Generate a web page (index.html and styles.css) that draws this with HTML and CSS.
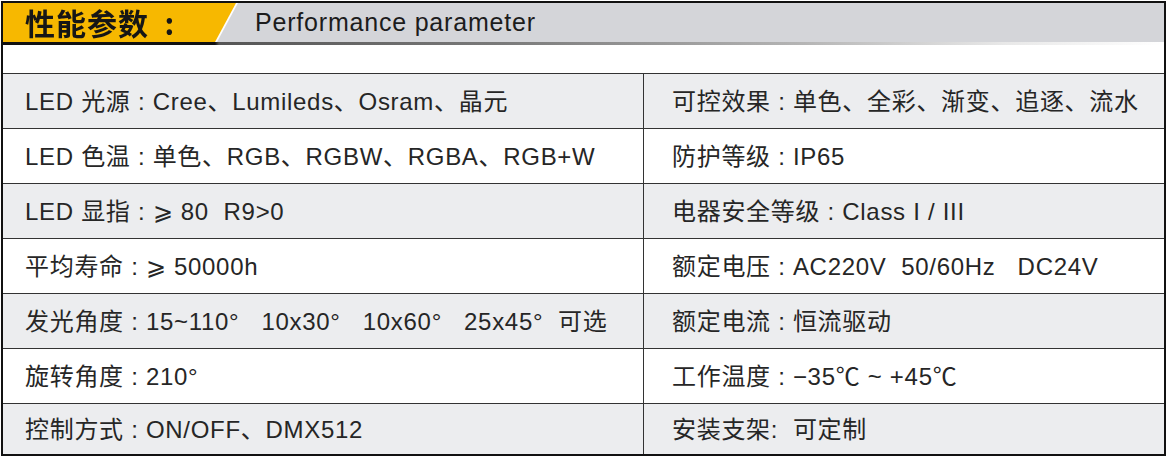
FILE: index.html
```html
<!DOCTYPE html>
<html lang="zh">
<head>
<meta charset="utf-8">
<link rel="stylesheet" href="styles.css">
</head>
<body>
<div class="sheet">
  <div class="header">
    <div class="tag-wrap"><div class="tag">性能参数&nbsp;&nbsp;:</div></div>
    <div class="title">Performance parameter</div>
  </div>
  <div class="header-line"></div>
  <div class="spacer"></div>
  <div class="grid">
    <div class="cell odd">LED 光源 : Cree、Lumileds、Osram、晶元</div>
    <div class="cell odd right">可控效果 : 单色、全彩、渐变、追逐、流水</div>
    <div class="cell">LED 色温 : 单色、RGB、RGBW、RGBA、RGB+W</div>
    <div class="cell right">防护等级 : IP65</div>
    <div class="cell odd">LED 显指 : ⩾ 80&nbsp;&nbsp;R9&gt;0</div>
    <div class="cell odd right">电器安全等级 : Class I / III</div>
    <div class="cell">平均寿命 : ⩾ 50000h</div>
    <div class="cell right">额定电压 : AC220V&nbsp;&nbsp;50/60Hz&nbsp;&nbsp;&nbsp;DC24V</div>
    <div class="cell odd">发光角度 : 15~110°&nbsp;&nbsp;&nbsp;10x30°&nbsp;&nbsp;&nbsp;10x60°&nbsp;&nbsp;&nbsp;25x45°&nbsp;&nbsp;可选</div>
    <div class="cell odd right">额定电流 : 恒流驱动</div>
    <div class="cell">旋转角度 : 210°</div>
    <div class="cell right">工作温度 : −35℃ ~ +45℃</div>
    <div class="cell odd">控制方式 : ON/OFF、DMX512</div>
    <div class="cell odd right">安装支架:&nbsp;&nbsp;可定制</div>
  </div>
</div>
</body>
</html>
```

FILE: styles.css
```css
html, body {
  margin: 0;
  padding: 0;
  background: #fff;
}
body {
  font-family: "Liberation Sans", "Noto Sans CJK SC", sans-serif;
  color: #262626;
}
.sheet {
  margin: 1px 0 0 1px;
  width: 1165px;
  border: 2px solid #111;
  box-sizing: border-box;
}
.header {
  display: flex;
  height: 39px;
  background: #d4d5d9;
}
.tag-wrap {
  filter: drop-shadow(2px 0 0 rgba(255,255,255,0.95));
}
.tag {
  width: 233px;
  height: 39px;
  background: #f7b800;
  clip-path: polygon(0 0, 100% 0, 212px 100%, 0 100%);
  font-family: "Noto Sans CJK SC", sans-serif;
  font-weight: 700;
  font-size: 30px;
  line-height: 39px;
  padding-left: 22px;
  box-sizing: border-box;
  color: #161616;
  letter-spacing: 1px;
  white-space: nowrap;
}
.title {
  margin-left: 19px;
  font-size: 25px;
  letter-spacing: 0.8px;
  line-height: 39px;
  color: #1c1c1c;
}
.header-line {
  height: 3px;
  background: linear-gradient(to right, #111 0, #111 212px, #555 216px, #7a7a7a 500px, #b5b5b5 800px, #e8e8e8 1000px, #fff 1160px);
}
.spacer {
  height: 28px;
  border-bottom: 1px solid #333;
}
.grid {
  display: grid;
  grid-template-columns: 640px 1fr;
}
.cell {
  border-bottom: 1px solid #333;
  display: flex;
  align-items: center;
  padding-left: 22px;
  padding-bottom: 4px;
  box-sizing: border-box;
  height: 55px;
  font-size: 24px;
  letter-spacing: 0.7px;
  white-space: nowrap;
  background: #fff;
}
.cell:nth-last-child(-n+2) {
  border-bottom: none;
  height: 50px;
}
.cell.odd {
  background: #ecedef;
}
.cell.right {
  border-left: 1px solid #333;
  padding-left: 28px;
}
```
